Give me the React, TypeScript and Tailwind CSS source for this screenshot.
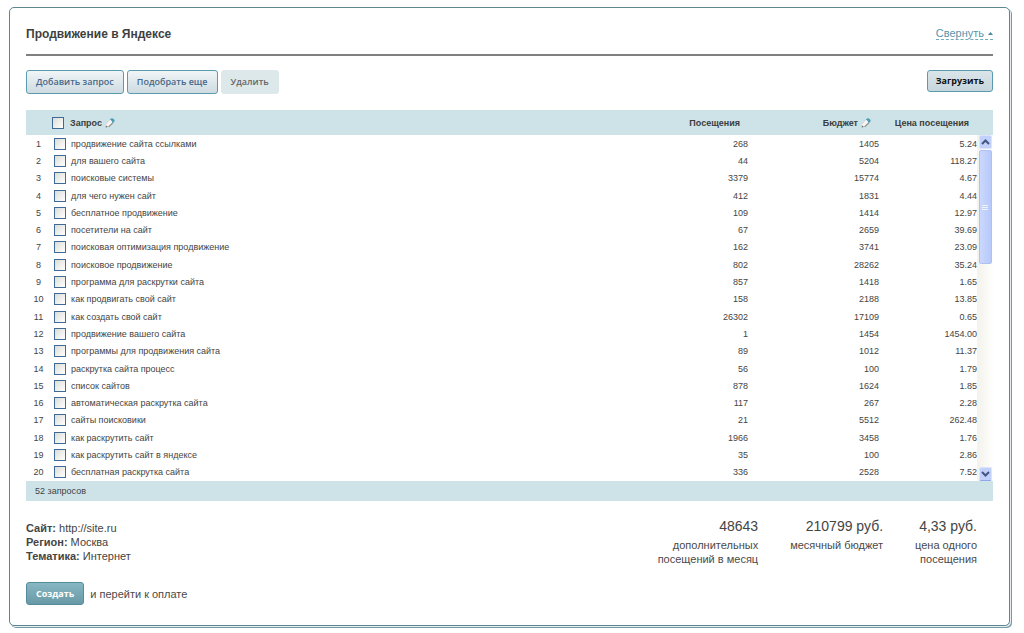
interface Query {
  text: string;
  visits: string;
  budget: string;
  price: string;
}

const queries: Query[] = [
  { text: 'продвижение сайта ссылками', visits: '268', budget: '1405', price: '5.24' },
  { text: 'для вашего сайта', visits: '44', budget: '5204', price: '118.27' },
  { text: 'поисковые системы', visits: '3379', budget: '15774', price: '4.67' },
  { text: 'для чего нужен сайт', visits: '412', budget: '1831', price: '4.44' },
  { text: 'бесплатное продвижение', visits: '109', budget: '1414', price: '12.97' },
  { text: 'посетители на сайт', visits: '67', budget: '2659', price: '39.69' },
  { text: 'поисковая оптимизация продвижение', visits: '162', budget: '3741', price: '23.09' },
  { text: 'поисковое продвижение', visits: '802', budget: '28262', price: '35.24' },
  { text: 'программа для раскрутки сайта', visits: '857', budget: '1418', price: '1.65' },
  { text: 'как продвигать свой сайт', visits: '158', budget: '2188', price: '13.85' },
  { text: 'как создать свой сайт', visits: '26302', budget: '17109', price: '0.65' },
  { text: 'продвижение вашего сайта', visits: '1', budget: '1454', price: '1454.00' },
  { text: 'программы для продвижения сайта', visits: '89', budget: '1012', price: '11.37' },
  { text: 'раскрутка сайта процесс', visits: '56', budget: '100', price: '1.79' },
  { text: 'список сайтов', visits: '878', budget: '1624', price: '1.85' },
  { text: 'автоматическая раскрутка сайта', visits: '117', budget: '267', price: '2.28' },
  { text: 'сайты поисковики', visits: '21', budget: '5512', price: '262.48' },
  { text: 'как раскрутить сайт', visits: '1966', budget: '3458', price: '1.76' },
  { text: 'как раскрутить сайт в яндексе', visits: '35', budget: '100', price: '2.86' },
  { text: 'бесплатная раскрутка сайта', visits: '336', budget: '2528', price: '7.52' },
];

const checkboxClass =
  'size-3 shrink-0 appearance-none border border-[#3f6a97] bg-linear-to-br from-[#dcdcd7] to-white checked:bg-[#3f6a97]';

const buttonClass =
  'rounded-[3px] border font-["Open_Sans",sans-serif] text-[9px] leading-3';

function PencilIcon() {
  return (
    <svg className="size-[10px] shrink-0" viewBox="0 0 10 10" aria-hidden="true">
      <path d="M0.8 9 L1.2 5.6 L5.4 0.8 L9 3.8 L4.6 8.6 Z" fill="#f7f5f3" />
      <path d="M1.2 5.8 L5.4 1" stroke="#b3c3c7" strokeWidth="0.6" />
      <path d="M4.9 1.5 Q6.6 -0.4 8.6 0.9 Q10.4 2.4 9 4.2 L7.6 5.2 Q7.2 2.6 4.9 1.5 Z" fill="#4f9db5" />
      <path d="M3.6 8.9 L7.8 4.9" stroke="#8a8a8a" strokeWidth="1.3" />
      <path d="M0.6 9.5 L1 7.2 L3 9 Z" fill="#777" />
    </svg>
  );
}

function Scrollbar() {
  return (
    <div className="flex flex-1 flex-col items-center bg-linear-to-r from-[#f3f2ec] to-[#fefefc]">
      <button
        type="button"
        aria-label="Прокрутить вверх"
        className="flex h-[14px] w-[13px] items-center justify-center rounded-[2px] border border-[#dbe4fb] bg-[#c2d1fb]"
      >
        <svg className="h-[6px] w-[9px]" viewBox="0 0 9 6" aria-hidden="true">
          <path d="M1 5 L4.5 1.5 L8 5" fill="none" stroke="#43567f" strokeWidth="2" />
        </svg>
      </button>
      <div className="mt-px flex h-[114px] w-[13px] flex-col items-center justify-center gap-px rounded-[2px] border border-[#afc1f2] bg-linear-to-r from-[#cbd8fd] to-[#b7c9fa]">
        <span className="h-px w-[6px] bg-[#eef4fe]" />
        <span className="h-px w-[6px] bg-[#eef4fe]" />
        <span className="h-px w-[6px] bg-[#eef4fe]" />
      </div>
      <button
        type="button"
        aria-label="Прокрутить вниз"
        className="mt-auto flex h-[14px] w-[13px] items-center justify-center rounded-[2px] border border-[#dbe4fb] border-b-[#8fa8e6] bg-[#c2d1fb]"
      >
        <svg className="h-[6px] w-[9px]" viewBox="0 0 9 6" aria-hidden="true">
          <path d="M1 1 L4.5 4.5 L8 1" fill="none" stroke="#43567f" strokeWidth="2" />
        </svg>
      </button>
    </div>
  );
}

function QueryTable() {
  return (
    <div className="flex">
      <table className="flex-1 table-fixed border-collapse text-[9px] leading-3 text-[#444]">
        <colgroup>
          <col className="w-[25px]" />
          <col />
          <col className="w-[120px]" />
          <col className="w-[131px]" />
          <col className="w-[98px]" />
        </colgroup>
        <thead className="bg-[#cde3e8] text-[#3c3c3c]">
          <tr className="h-[25px]">
            <th aria-label="Номер" />
            <th className="p-0 text-left font-bold">
              <label className="flex items-center gap-[6px] pl-px">
                <input type="checkbox" className={checkboxClass} />
                <span className="flex items-center gap-[3px]">
                  Запрос
                  <PencilIcon />
                </span>
              </label>
            </th>
            <th className="p-0 pr-2 text-right font-bold">Посещения</th>
            <th className="p-0 pr-2 font-bold">
              <span className="flex items-center justify-end gap-[3px]">
                Бюджет
                <PencilIcon />
              </span>
            </th>
            <th className="p-0 pr-2 text-right font-bold">Цена посещения</th>
          </tr>
        </thead>
        <tbody className="h-[346px]">
          {queries.map((query, index) => (
            <tr key={query.text}>
              <td className="p-0 text-center">{index + 1}</td>
              <td className="p-0">
                <label className="flex items-center gap-[5px] pl-[3px]">
                  <input type="checkbox" className={checkboxClass} />
                  {query.text}
                </label>
              </td>
              <td className="p-0 text-right">{query.visits}</td>
              <td className="p-0 text-right">{query.budget}</td>
              <td className="p-0 text-right">{query.price}</td>
            </tr>
          ))}
        </tbody>
      </table>
      <div className="flex w-4 flex-col">
        <div className="h-[25px] bg-[#cde3e8]" />
        <Scrollbar />
      </div>
    </div>
  );
}

function Total({ value, lines }: { value: string; lines: string[] }) {
  return (
    <div>
      <div className="pb-[2px] text-[14px] leading-5 text-[#444]">{value}</div>
      {lines.map((line) => (
        <div key={line}>{line}</div>
      ))}
    </div>
  );
}

export default function App() {
  return (
    <main className="bg-white pt-[7px] pr-[14px] pb-2 pl-[9px] font-['Liberation_Sans',Arial,sans-serif] text-[11px] leading-[14px] text-[#4a4a4a]">
      <section className="rounded-[5px] border border-[#5c8791] px-4 pt-[19px] pb-5 shadow-[1px_1px_0_#e4f0f3,2px_2px_0_#7799a1]">
        <header className="flex items-start justify-between border-b-2 border-[#808080] pb-[13px]">
          <h1 className="text-[12px] leading-[14px] font-bold text-[#3f3f3f]">Продвижение в Яндексе</h1>
          <a href="#collapse" className="flex items-center gap-1 border-b border-dashed border-[#6fabbb] leading-3 text-[#5795a8]">
            Свернуть
            <svg className="h-[3px] w-[5px]" viewBox="0 0 5 3" aria-hidden="true">
              <path d="M0 3 L2.5 0 L5 3 Z" fill="#4a8798" />
            </svg>
          </a>
        </header>

        <div className="flex items-start justify-between pt-[14px] pb-4">
          <div className="flex gap-[3px]">
            <button type="button" className={`${buttonClass} h-6 border-[#5a9bae] bg-linear-to-b from-[#f1f5f7] to-[#cddbe1] px-[9px] font-semibold text-[#47688a]`}>
              Добавить запрос
            </button>
            <button type="button" className={`${buttonClass} h-6 border-[#5a9bae] bg-linear-to-b from-[#f1f5f7] to-[#cddbe1] px-[9px] font-semibold text-[#47688a]`}>
              Подобрать еще
            </button>
            <button type="button" className={`${buttonClass} h-6 border-[#dde8ea] bg-[#dde8ea] px-[9px] font-semibold text-[#666]`}>
              Удалить
            </button>
          </div>
          <button type="button" className={`${buttonClass} h-[22px] border-[#5a9bae] bg-linear-to-b from-[#dae5e9] to-[#c6d6dd] px-2 font-bold text-[#111]`}>
            Загрузить
          </button>
        </div>

        <QueryTable />
        <div className="bg-[#cde3e8] px-[9px] py-1 text-[9px] leading-3 text-[#444]">52 запросов</div>

        <div className="flex items-start justify-between pt-[15px] pr-4">
          <div className="pt-[5px] text-[#444]">
            <p><b>Сайт:</b> http://site.ru</p>
            <p><b>Регион:</b> Москва</p>
            <p><b>Тематика:</b> Интернет</p>
          </div>
          <div className="flex gap-8 text-right">
            <Total value="48643" lines={['дополнительных', 'посещений в месяц']} />
            <Total value="210799 руб." lines={['месячный бюджет']} />
            <Total value="4,33 руб." lines={['цена одного', 'посещения']} />
          </div>
        </div>

        <div className="flex items-center gap-[6px] pt-4">
          <button type="button" className={`${buttonClass} h-[23px] border-[#568c9a] bg-linear-to-b from-[#86b7c2] to-[#6899a6] px-[9px] font-bold text-white`}>
            Создать
          </button>
          <span>и перейти к оплате</span>
        </div>
      </section>
    </main>
  );
}
